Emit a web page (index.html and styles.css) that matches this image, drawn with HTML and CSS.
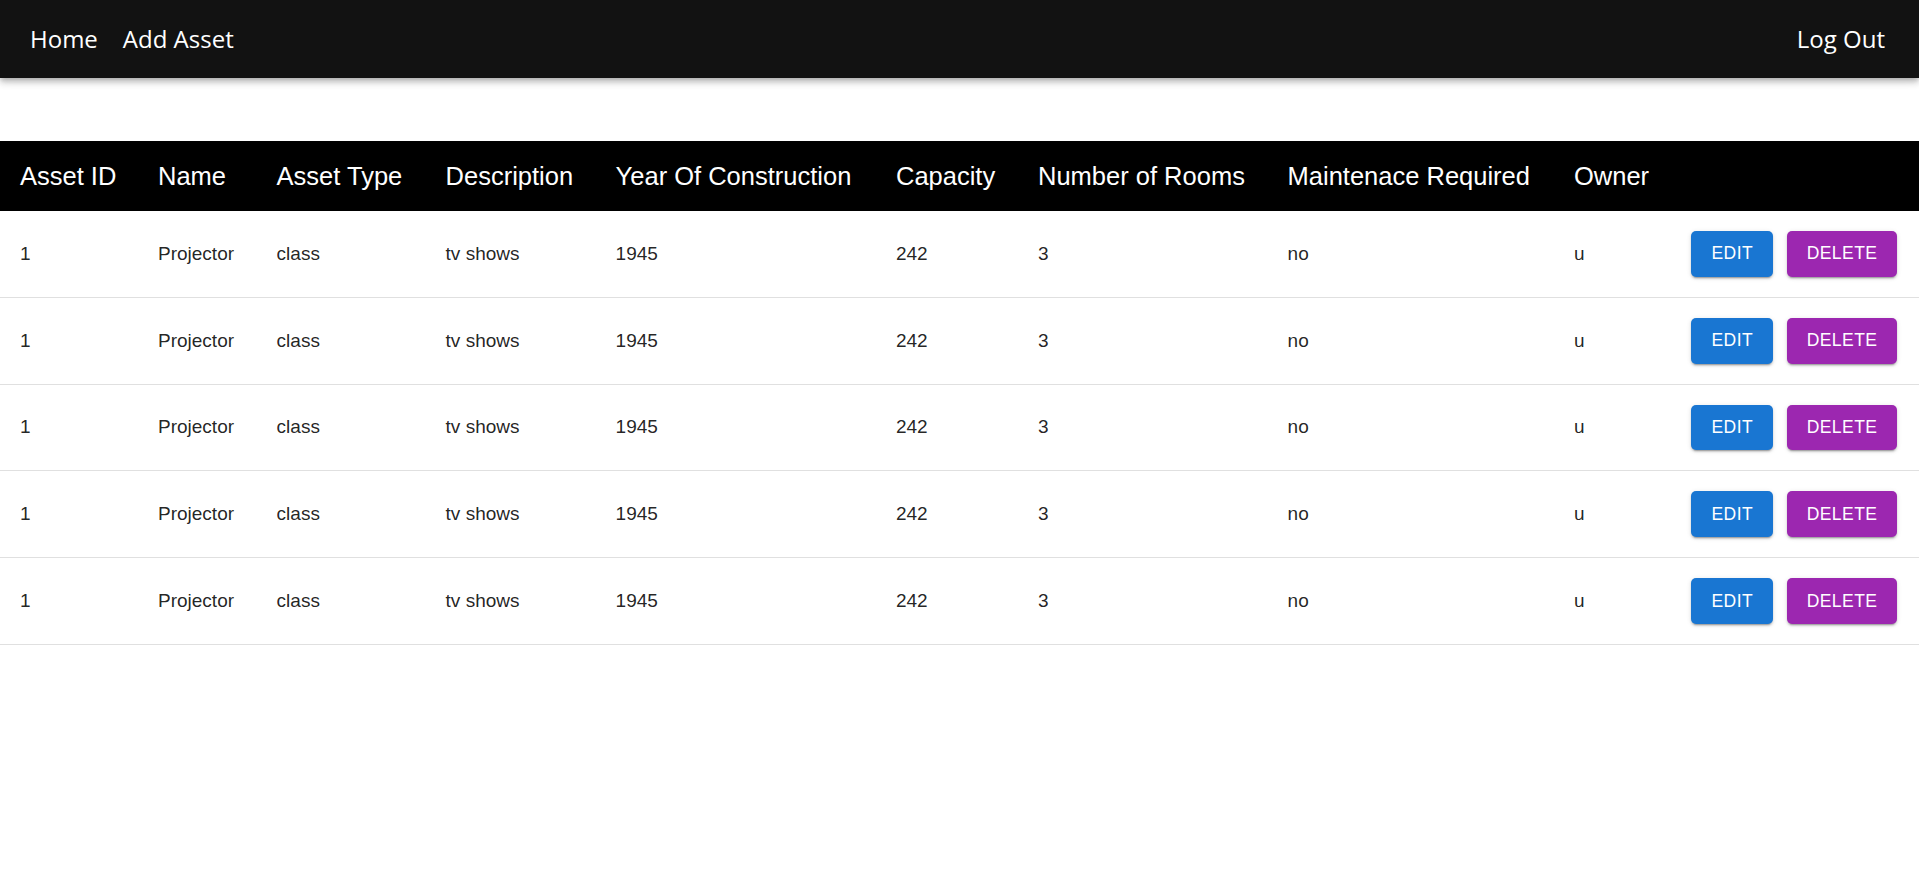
FILE: index.html
```html
<!DOCTYPE html>
<html lang="en">
<head>
<meta charset="utf-8">
<title>Assets</title>
<link rel="stylesheet" href="styles.css">
</head>
<body>
<header class="appbar">
  <nav class="nav-left">
    <a class="nav-link" href="#">Home</a>
    <a class="nav-link" href="#">Add Asset</a>
  </nav>
  <a class="nav-link" href="#">Log Out</a>
</header>
<main class="content">
  <table class="assets">
    <colgroup>
      <col class="c-id"><col class="c-name"><col class="c-type"><col class="c-desc"><col class="c-year">
      <col class="c-cap"><col class="c-rooms"><col class="c-maint"><col class="c-owner"><col class="c-actions">
    </colgroup>
    <thead>
      <tr>
        <th>Asset ID</th><th>Name</th><th>Asset Type</th><th>Description</th><th>Year Of Construction</th>
        <th>Capacity</th><th>Number of Rooms</th><th>Maintenace Required</th><th>Owner</th><th></th>
      </tr>
    </thead>
    <tbody>
      <tr><td>1</td><td>Projector</td><td>class</td><td>tv shows</td><td>1945</td><td>242</td><td>3</td><td>no</td><td>u</td>
        <td><div class="actions"><button class="btn btn-edit">Edit</button><button class="btn btn-delete">Delete</button></div></td></tr>
      <tr><td>1</td><td>Projector</td><td>class</td><td>tv shows</td><td>1945</td><td>242</td><td>3</td><td>no</td><td>u</td>
        <td><div class="actions"><button class="btn btn-edit">Edit</button><button class="btn btn-delete">Delete</button></div></td></tr>
      <tr><td>1</td><td>Projector</td><td>class</td><td>tv shows</td><td>1945</td><td>242</td><td>3</td><td>no</td><td>u</td>
        <td><div class="actions"><button class="btn btn-edit">Edit</button><button class="btn btn-delete">Delete</button></div></td></tr>
      <tr><td>1</td><td>Projector</td><td>class</td><td>tv shows</td><td>1945</td><td>242</td><td>3</td><td>no</td><td>u</td>
        <td><div class="actions"><button class="btn btn-edit">Edit</button><button class="btn btn-delete">Delete</button></div></td></tr>
      <tr><td>1</td><td>Projector</td><td>class</td><td>tv shows</td><td>1945</td><td>242</td><td>3</td><td>no</td><td>u</td>
        <td><div class="actions"><button class="btn btn-edit">Edit</button><button class="btn btn-delete">Delete</button></div></td></tr>
    </tbody>
  </table>
</main>
</body>
</html>
```

FILE: styles.css
```css
* { box-sizing: border-box; }

html, body {
  margin: 0;
  padding: 0;
  background: #ffffff;
}

body {
  font-family: "Liberation Sans", Arial, sans-serif;
}

.appbar {
  height: 78px;
  background: #121212;
  display: flex;
  align-items: center;
  justify-content: space-between;
  padding: 0 34px 0 30px;
  box-shadow: 0 2px 5px -1px rgba(0,0,0,0.2), 0 5px 6px 0 rgba(0,0,0,0.14), 0 1px 12px 0 rgba(0,0,0,0.12);
  position: relative;
  z-index: 1;
}

.nav-left {
  display: flex;
  align-items: center;
  gap: 25px;
}

.nav-link {
  font-family: "Open Sans", "Noto Sans", sans-serif;
  font-size: 24px;
  color: #ffffff;
  text-decoration: none;
  line-height: 1.2;
}

.content {
  padding-top: 63px;
}

.assets {
  width: 100%;
  border-collapse: collapse;
  table-layout: fixed;
}

.c-id { width: 138px; }
.c-name { width: 118.6px; }
.c-type { width: 169px; }
.c-desc { width: 170px; }
.c-year { width: 280.4px; }
.c-cap { width: 142px; }
.c-rooms { width: 249.6px; }
.c-maint { width: 286.4px; }
.c-owner { width: 117.5px; }
.c-actions { width: auto; }

.assets th {
  background: #000000;
  color: #ffffff;
  font-weight: 400;
  font-size: 25.5px;
  line-height: 30px;
  text-align: left;
  padding: 20px 20px;
  white-space: nowrap;
}

.assets td {
  font-size: 19px;
  line-height: 24px;
  color: rgba(0,0,0,0.87);
  padding: 20px 20px;
  border-bottom: 1px solid #e0e0e0;
  vertical-align: middle;
  white-space: nowrap;
}

.actions {
  display: flex;
  gap: 13.5px;
}

.btn {
  font-family: "Liberation Sans", Arial, sans-serif;
  font-size: 17.5px;
  font-weight: 500;
  text-transform: uppercase;
  letter-spacing: 0.45px;
  color: #ffffff;
  border: none;
  border-radius: 5px;
  height: 45.8px;
  padding: 0 20px;
  min-width: 80px;
  cursor: pointer;
  box-shadow: 0 3px 1px -2px rgba(0,0,0,0.2), 0 2px 2px 0 rgba(0,0,0,0.14), 0 1px 5px 0 rgba(0,0,0,0.12);
}

.btn-edit { background: #1976d2; }
.btn-delete { background: #9c27b0; }
```
